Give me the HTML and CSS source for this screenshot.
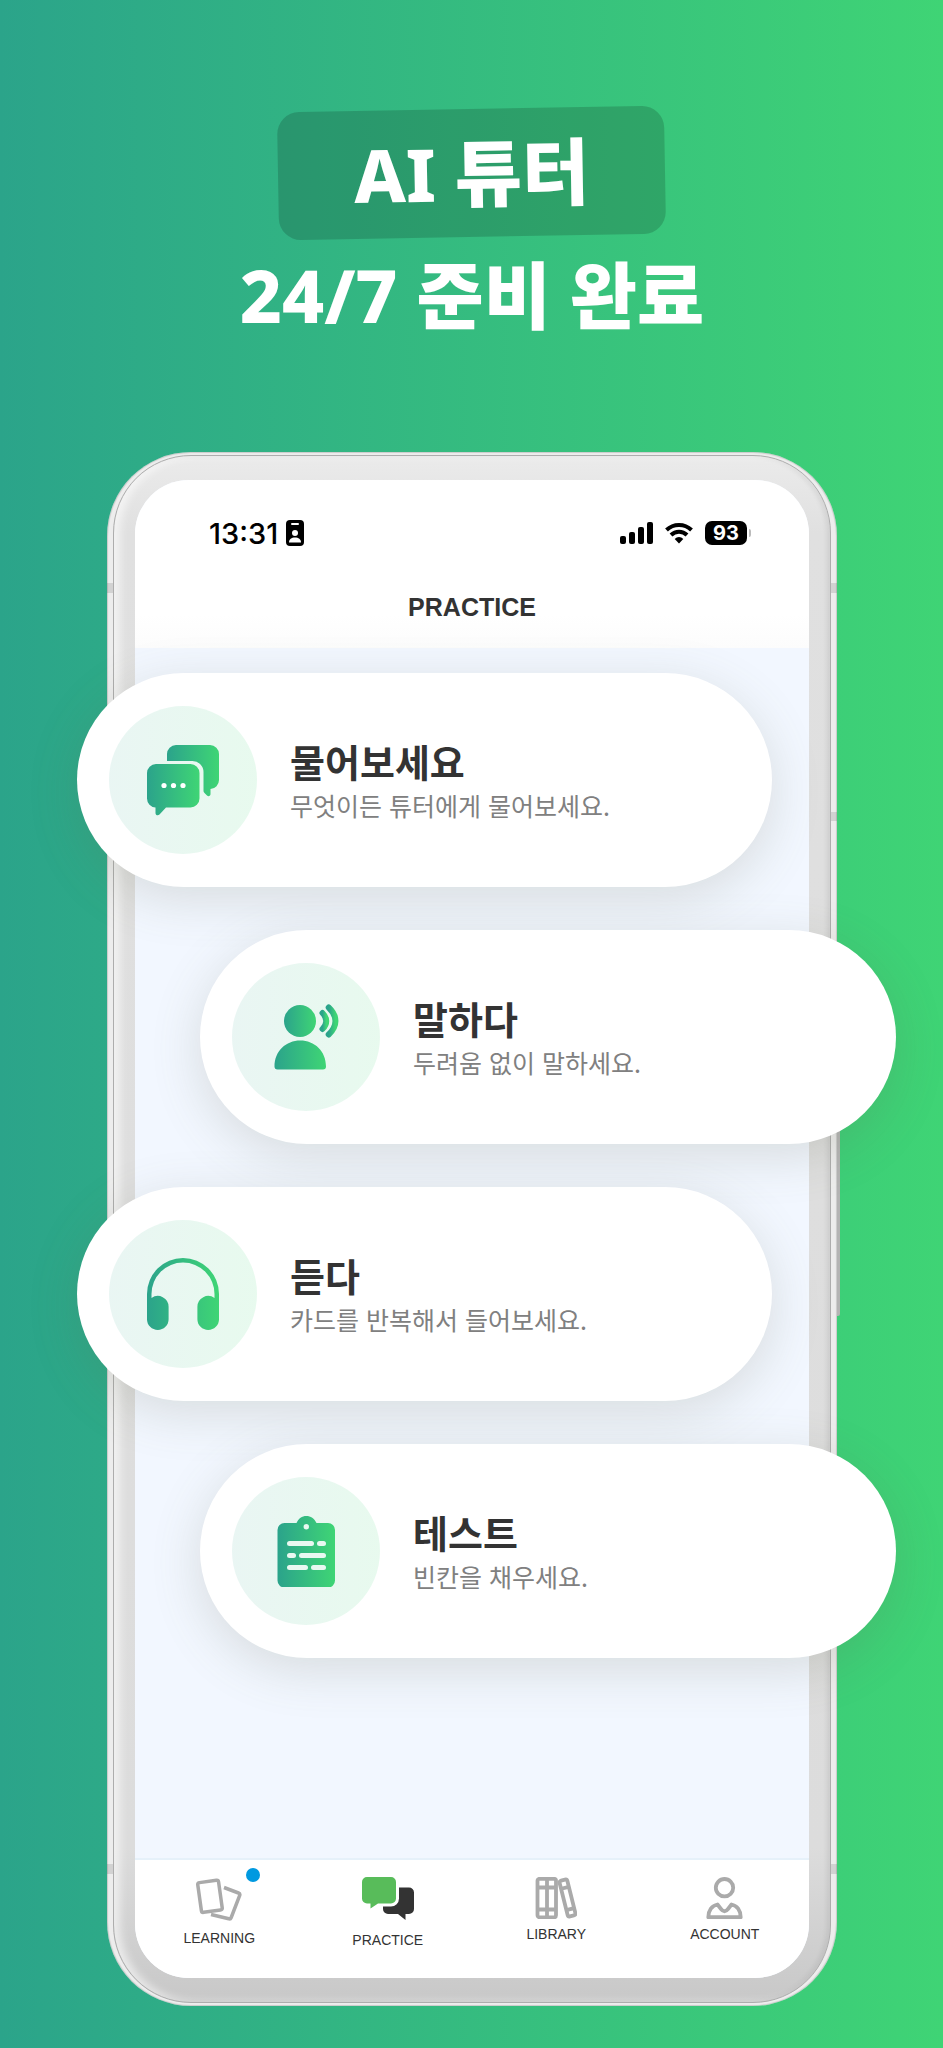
FILE: index.html
```html
<!DOCTYPE html>
<html lang="ko">
<head>
    <meta charset="UTF-8">
    <meta name="viewport" content="width=device-width, initial-scale=1.0">
    <title>AI 튜터</title>
    <link rel="stylesheet" href="styles.css">
</head>
<body>

    <!-- Shared gradient for the card icons -->
    <svg class="defs" aria-hidden="true">
        <defs>
            <linearGradient id="green" x1="0" y1="0" x2="1" y2="0">
                <stop offset="0" stop-color="#2ba38b"/>
                <stop offset="1" stop-color="#3fd575"/>
            </linearGradient>
        </defs>
    </svg>

    <h1 class="headline">
        <span class="badge">AI 튜터</span>
        <span class="line">24/7 준비 완료</span>
    </h1>

    <div class="phone">
        <div class="bezel">
            <main class="screen">
                <header>
                    <div class="status">
                        <span class="time">13:31</span>
                        <svg class="id-card" width="18" height="26" viewBox="0 0 18 26">
                            <rect width="18" height="26" rx="4"/>
                            <rect x="5" y="3" width="8" height="2" rx="1" fill="#fff"/>
                            <circle cx="9" cy="13" r="3" fill="#fff"/>
                            <path d="M3 22.500c0-3.500 2.500-5 6-5s6 1.500 6 5z" fill="#fff"/>
                        </svg>
                        <div class="indicators">
                            <svg width="33" height="22" viewBox="0 0 33 22">
                                <rect x="0" y="14" width="6" height="8" rx="2"/>
                                <rect x="9" y="10" width="6" height="12" rx="2"/>
                                <rect x="18" y="5" width="6" height="17" rx="2"/>
                                <rect x="27" y="0" width="6" height="22" rx="2"/>
                            </svg>
                            <svg width="28" height="22" viewBox="0 0 28 22">
                                <g fill="none" stroke="#000" stroke-width="4">
                                    <path d="M1.500 8a18 18 0 0 1 25 0"/>
                                    <path d="M6 13a11.500 11.500 0 0 1 16 0"/>
                                </g>
                                <path d="M14 21.500l-4.300-4.600a6 6 0 0 1 8.600 0z"/>
                            </svg>
                            <span class="battery">93</span>
                        </div>
                    </div>
                    <h2 class="title">PRACTICE</h2>
                </header>

                <div class="cards">
                    <a class="card" href="#ask">
                        <span class="icon">
                            <svg width="72" height="72" viewBox="0 0 72 72" fill="url(#green)">
                                <path d="M20 17v-7a9 9 0 0 1 9-9h34a9 9 0 0 1 9 9v26a9 9 0 0 1-8.500 9v5c0 2-2 3-3.500 1.500l-2.500-2.500c-.7-.7-1-1.300-1-2V28a11 11 0 0 0-11-11z"/>
                                <path d="M9 20h34.500a9 9 0 0 1 9 9v25.500a9 9 0 0 1-9 9H19l-6.500 7c-1.500 1.500-4 .8-4-1.500v-5.500A9 9 0 0 1 0 54.500V29a9 9 0 0 1 9-9z"/>
                                <g fill="#fff">
                                    <circle cx="17" cy="41.500" r="2.600"/>
                                    <circle cx="26.500" cy="41.500" r="2.600"/>
                                    <circle cx="36" cy="41.500" r="2.600"/>
                                </g>
                            </svg>
                        </span>
                        <span class="text">
                            <strong>물어보세요</strong>
                            <small>무엇이든 튜터에게 물어보세요.</small>
                        </span>
                    </a>

                    <a class="card" href="#speak">
                        <span class="icon">
                            <svg width="72" height="72" viewBox="0 0 72 72" fill="url(#green)">
                                <circle cx="30" cy="20" r="16"/>
                                <path d="M4.500 65.500C4.500 50 16 39.500 30.250 39.500S56 50 56 65.500a3 3 0 0 1-3 3H7.500a3 3 0 0 1-3-3z"/>
                                <g fill="none" stroke="url(#green)" stroke-width="6" stroke-linecap="round">
                                    <path d="M52.500 12c5 5 5 11 0 16"/>
                                    <path d="M58.700 6.500c9 8.500 9 18.500 0 27"/>
                                </g>
                            </svg>
                        </span>
                        <span class="text">
                            <strong>말하다</strong>
                            <small>두려움 없이 말하세요.</small>
                        </span>
                    </a>

                    <a class="card" href="#listen">
                        <span class="icon">
                            <svg width="72" height="72" viewBox="0 0 72 72" fill="url(#green)">
                                <path d="M0 61.200V36a36 36 0 0 1 72 0v25.200a10.800 10.800 0 0 1-21.600 0V48.800A10.800 10.800 0 0 1 67.500 40v-4a31.500 31.500 0 0 0-63 0v4A10.800 10.800 0 0 1 21.600 48.800v12.400a10.800 10.800 0 0 1-21.600 0z"/>
                            </svg>
                        </span>
                        <span class="text">
                            <strong>듣다</strong>
                            <small>카드를 반복해서 들어보세요.</small>
                        </span>
                    </a>

                    <a class="card" href="#test">
                        <span class="icon">
                            <svg width="72" height="72" viewBox="0 0 72 72" fill="url(#green)">
                                <path d="M14.500 8H26.500C28.500 3.500 32 1 36.300 1S44.500 3.500 46.500 8H58a7 7 0 0 1 7 7v50.500a7 7 0 0 1-7 7H14.500a7 7 0 0 1-7-7V15a7 7 0 0 1 7-7z"/>
                                <g fill="#e9f8f1">
                                    <circle cx="36.300" cy="11.700" r="2.700"/>
                                    <rect x="17" y="26" width="27" height="5" rx="2.500"/>
                                    <rect x="47" y="26" width="9" height="5" rx="2.500"/>
                                    <rect x="17" y="38" width="9" height="5" rx="2.500"/>
                                    <rect x="29" y="38" width="27" height="5" rx="2.500"/>
                                    <rect x="17" y="50" width="21" height="5" rx="2.500"/>
                                    <rect x="41" y="50" width="15" height="5" rx="2.500"/>
                                </g>
                            </svg>
                        </span>
                        <span class="text">
                            <strong>테스트</strong>
                            <small>빈칸을 채우세요.</small>
                        </span>
                    </a>
                </div>

                <nav class="tabs">
                    <a href="#learning">
                        <span class="tab-icon">
                            <svg width="46" height="46" viewBox="1 0 46 46" fill="none" stroke="#aaa" stroke-width="3.500">
                                <rect x="4.500" y="4.300" width="21" height="30" rx="2" transform="rotate(-8 15 19.300)"/>
                                <path d="M29 10.500l14.500 5.500q1.800.7 1.200 2.500l-8.500 22q-.7 1.800-2.500 1.200L16 37.500"/>
                            </svg>
                            <span class="dot"></span>
                        </span>
                        LEARNING
                    </a>
                    <a href="#practice">
                        <span class="tab-icon">
                            <svg width="52" height="48" viewBox="0 0 52 48">
                                <path fill="#58bc5a" d="M5 0h24a5 5 0 0 1 5 5v16.500a5 5 0 0 1-5 5H16l-7.500 5v-5H5a5 5 0 0 1-5-5V5a5 5 0 0 1 5-5z"/>
                                <path fill="#333" d="M37 10.500h10a5 5 0 0 1 5 5V32a5 5 0 0 1-5 5h-3.500v6L36 37H26a5 5 0 0 1-5-5v-2.500h8a8 8 0 0 0 8-8z"/>
                            </svg>
                        </span>
                        PRACTICE
                    </a>
                    <a href="#library">
                        <span class="tab-icon">
                            <svg width="42" height="42" viewBox="0 0 42 42" fill="none" stroke="#aaa" stroke-width="3.800">
                                <rect x="2.500" y="1.800" width="18.500" height="38.500" rx="2"/>
                                <path d="M12 2v38M2.500 10.500H21M2.500 32.500H21"/>
                                <g transform="rotate(-14 32.500 21)">
                                    <rect x="28.500" y="2.500" width="8" height="37" rx="2"/>
                                    <path d="M28.500 10.500h8M28.500 32.500h8"/>
                                </g>
                            </svg>
                        </span>
                        LIBRARY
                    </a>
                    <a href="#account">
                        <span class="tab-icon">
                            <svg width="37" height="42" viewBox="0 0 37 42" fill="none" stroke="#aaa" stroke-width="3.800" stroke-linejoin="round">
                                <circle cx="18.500" cy="10.700" r="8.700"/>
                                <path d="M2.300 40.200C2.300 33.500 6 28.500 11.500 27.500l3.500 4.500q3.500 4.500 7 0l3.500-4.500C31 28.500 34.700 33.500 34.700 40.200z"/>
                            </svg>
                        </span>
                        ACCOUNT
                    </a>
                </nav>
            </main>
        </div>
    </div>

</body>
</html>
```

FILE: styles.css
```css
* {
    margin: 0;
    padding: 0;
    box-sizing: border-box;
}

body {
    font-family: 'Noto Sans CJK KR', sans-serif;
    background: linear-gradient(to right, #2ba48a, #3fd475);
    color: #333;
    min-height: 100vh;
    padding: 106px 106px 42px 107px;
    overflow-x: hidden;
}

a {
    color: inherit;
    text-decoration: none;
}

svg {
    display: block;
}

.defs {
    position: absolute;
    width: 0;
    height: 0;
}

/* Headline */
.headline {
    display: flex;
    flex-direction: column;
    align-items: center;
    font-family: 'Noto Sans', 'Noto Sans CJK KR', sans-serif;
    font-size: 73px;
    font-weight: 800;
    line-height: 128px;
    color: #fff;
    height: 346px;
    padding-top: 3px;
}

.badge {
    padding: 0 76px;
    background: rgba(0, 0, 0, 0.16);
    border-radius: 22px;
    transform: rotate(-1deg);
}

.headline .line {
    line-height: 116px;
}

/* Phone frame, with antenna bands on the edges */
.phone {
    position: relative;
    padding: 3px 6px;
    border-radius: 84px;
    background:
        linear-gradient(#d2d2d2, #d2d2d2) 0 131px / 6px 10px no-repeat,
        linear-gradient(#d2d2d2, #d2d2d2) 100% 131px / 6px 10px no-repeat,
        linear-gradient(#d2d2d2, #d2d2d2) 100% 360px / 6px 9px no-repeat,
        linear-gradient(#d2d2d2, #d2d2d2) 0 1412px / 6px 10px no-repeat,
        linear-gradient(#d2d2d2, #d2d2d2) 100% 1412px / 6px 10px no-repeat,
        #ededed;
    box-shadow: inset 0 0 1px 1px rgba(0, 0, 0, 0.15);
}

/* Side button */
.phone::after {
    content: '';
    position: absolute;
    top: 550px;
    right: -3px;
    width: 3px;
    height: 314px;
    border-radius: 0 2px 2px 0;
    background: #b4b4b4;
}

.bezel {
    padding: 24px 21px;
    border: 1px solid #adadad;
    border-radius: 78px;
    background: linear-gradient(#ebebeb, #e0e0e0 5%, #dcdcdc 90%, #c8c8c8);
    box-shadow: inset 6px 0 8px rgba(255, 255, 255, 0.6), inset -3px 0 5px rgba(0, 0, 0, 0.08);
}

.screen {
    display: block;
    background: #f2f7ff;
    border-radius: 54px;
}

header {
    background: linear-gradient(#fff 80%, #fcfcfc);
    border-radius: 54px 54px 0 0;
    padding-bottom: 20px;
}

.status {
    display: flex;
    align-items: center;
    height: 106px;
    padding: 0 58px 0 74px;
}

.time {
    font-family: Inter, sans-serif;
    font-size: 29px;
    font-weight: 500;
    color: #000;
}

.id-card {
    margin-left: 8px;
}

.indicators {
    display: flex;
    align-items: center;
    gap: 12px;
    margin-left: auto;
}

.battery {
    position: relative;
    width: 42px;
    height: 24px;
    margin-right: 4px;
    border-radius: 7px;
    background: #000;
    color: #fff;
    font-family: Inter, sans-serif;
    font-size: 20px;
    font-weight: 700;
    line-height: 24px;
    text-align: center;
}

.battery::after {
    content: '';
    position: absolute;
    top: 8px;
    right: -4px;
    width: 2px;
    height: 8px;
    border-radius: 0 2px 2px 0;
    background: #bbb;
}

.title {
    font-family: 'Liberation Sans', Arial, sans-serif;
    font-size: 25px;
    line-height: 42px;
    text-align: center;
}

/* Cards stick out of the phone, left and right in turn */
.cards {
    display: flex;
    flex-direction: column;
    gap: 43px;
    padding: 25px 0 202px;
}

.card {
    position: relative;
    z-index: 1;
    display: flex;
    align-items: center;
    gap: 33px;
    height: 214px;
    margin: 0 37px 0 -58px;
    padding: 0 32px;
    background: #fff;
    border-radius: 107px;
    box-shadow: 0 12px 50px rgba(100, 105, 80, 0.19);
}

.card:nth-child(even) {
    margin: 0 -87px 0 65px;
}

.icon {
    display: flex;
    align-items: center;
    justify-content: center;
    flex: none;
    width: 148px;
    height: 148px;
    border-radius: 50%;
    background: linear-gradient(to right, rgba(43, 163, 139, 0.1), rgba(63, 213, 117, 0.12));
}

.text {
    display: flex;
    flex-direction: column;
    padding-top: 5px;
}

.text strong {
    font-size: 38px;
    font-weight: 700;
    line-height: 44px;
}

.text small {
    font-size: 25px;
    line-height: 44px;
    color: #808080;
}

/* Tab bar */
.tabs {
    display: grid;
    grid-template-columns: repeat(4, 1fr);
    height: 118px;
    padding-top: 17px;
    background: #fff;
    border-radius: 0 0 54px 54px;
    box-shadow: 0 -2px 0 #e6f1fa;
}

.tabs a {
    display: flex;
    flex-direction: column;
    align-items: center;
    gap: 7px;
    font-family: 'Liberation Sans', Arial, sans-serif;
    font-size: 14px;
    line-height: 16px;
}

.tab-icon {
    position: relative;
}

.dot {
    position: absolute;
    top: -9px;
    right: -18px;
    width: 14px;
    height: 14px;
    border-radius: 50%;
    background: #0099e0;
}
```
